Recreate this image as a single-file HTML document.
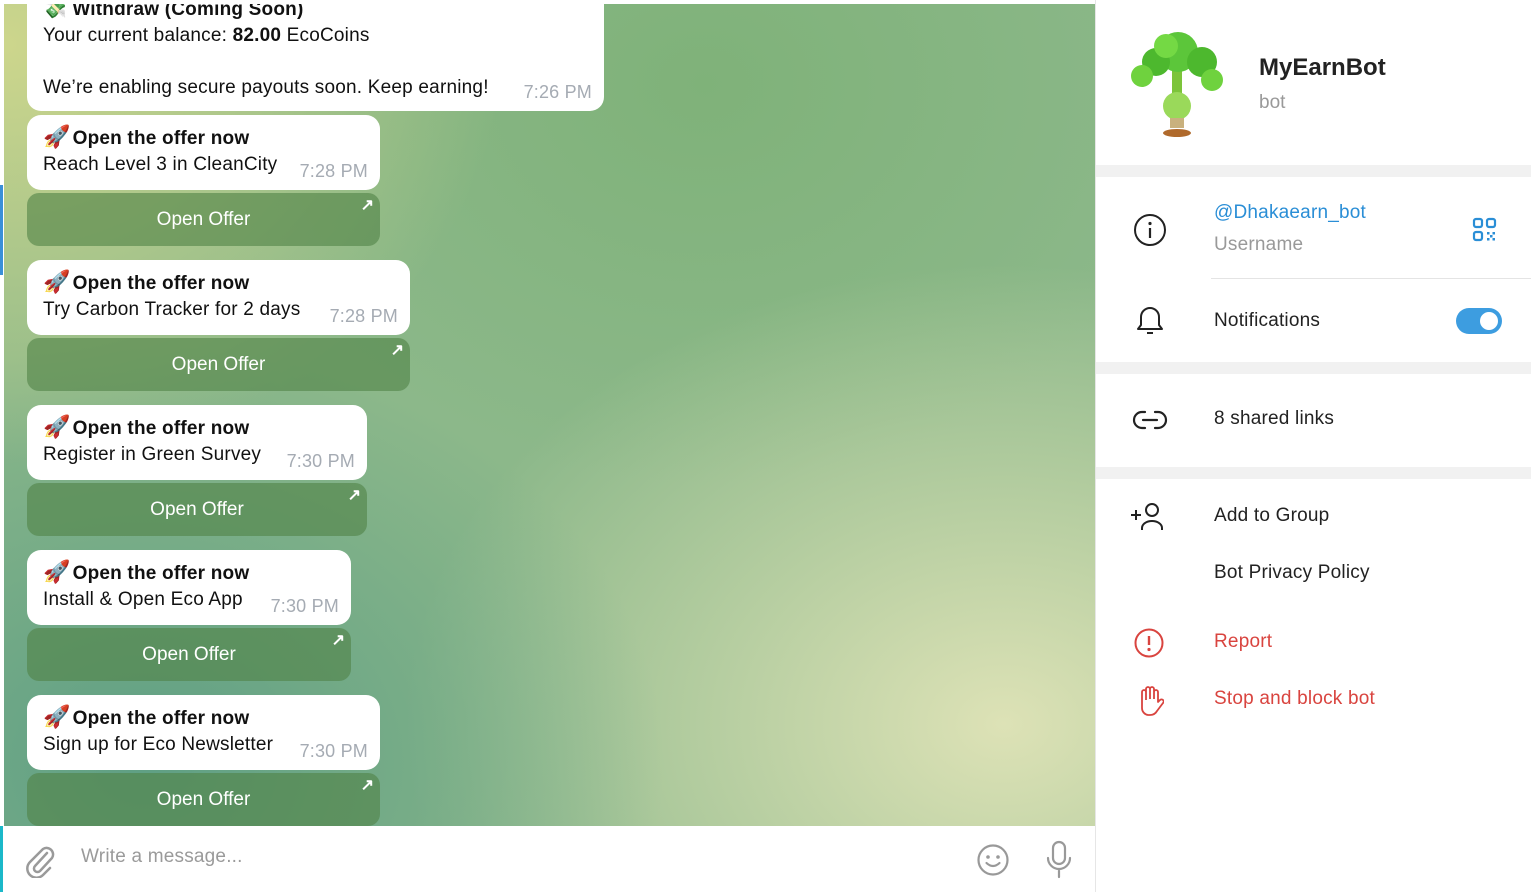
<!DOCTYPE html>
<html><head><meta charset="utf-8"><style>
*{box-sizing:border-box;margin:0;padding:0}
body{width:1531px;height:892px;overflow:hidden;background:#fff;font-family:"Liberation Sans",sans-serif;position:relative}
#chat{position:absolute;left:4px;top:4px;width:1091px;height:822px;overflow:hidden;
background:
radial-gradient(ellipse 500px 420px at 0px 40px,#cdd68c 0%,rgba(205,214,140,0) 100%),
radial-gradient(ellipse 520px 420px at 140px 760px,#5f9f84 0%,rgba(95,159,132,0) 100%),
radial-gradient(ellipse 600px 460px at 1000px 720px,#dde2b6 0%,rgba(221,226,182,0) 100%),
radial-gradient(ellipse 500px 400px at 700px 80px,#7fb279 0%,rgba(127,178,121,0) 100%),
#8cb88a;}
.b{position:absolute;left:23px;background:#fff;border-radius:14px;padding:9px 14px 0 16px;color:#111;font-size:19px;line-height:26px;letter-spacing:.2px}
.t{position:absolute;right:12px;bottom:6px;color:#a5abb3;font-size:18px}
.h{font-weight:bold}
.btn{position:absolute;left:23px;height:53px;border-radius:12px;background:rgba(80,130,70,.6);color:#fff;font-size:19px;text-align:center;line-height:53px}
.btn:after{content:"↗";position:absolute;right:6px;top:-14px;font-size:16px;font-weight:bold}
.r{font-size:22px;font-weight:normal;margin-right:2px}
#inp{position:absolute;left:4px;top:826px;width:1091px;height:66px;background:#fff}
#side{position:absolute;left:1095px;top:0;width:436px;height:892px;background:#fff;border-left:1px solid #e6e6e6}
.gap{position:absolute;left:0;width:436px;height:12px;background:#f1f1f1}
.lbl{position:absolute;left:118px;font-size:19px;color:#222;letter-spacing:.2px}
</style></head><body>
<div style="position:absolute;left:0;top:185px;width:3px;height:90px;background:#3a8fd8"></div>
<div style="position:absolute;left:0;top:826px;width:3px;height:66px;background:#1bb8c9"></div>
<div id="chat">
 <div class="b" style="top:-20px;width:577px;height:127px;border-top-left-radius:0;border-top-right-radius:0">
  <div class="h" style="margin-top:4px">💸 Withdraw (Coming Soon)</div>
  <div>Your current balance: <b>82.00</b> EcoCoins</div><div style="height:26px"></div>
  <div>We’re enabling secure payouts soon. Keep earning!</div>
  <div class="t">7:26 PM</div></div>

 <div class="b" style="top:111px;width:353px;height:75px"><div class="h"><span class="r">🚀</span>Open the offer now</div><div>Reach Level 3 in CleanCity</div><div class="t">7:28 PM</div></div>
 <div class="btn" style="top:189px;width:353px">Open Offer</div>

 <div class="b" style="top:256px;width:383px;height:75px"><div class="h"><span class="r">🚀</span>Open the offer now</div><div>Try Carbon Tracker for 2 days</div><div class="t">7:28 PM</div></div>
 <div class="btn" style="top:334px;width:383px">Open Offer</div>

 <div class="b" style="top:401px;width:340px;height:75px"><div class="h"><span class="r">🚀</span>Open the offer now</div><div>Register in Green Survey</div><div class="t">7:30 PM</div></div>
 <div class="btn" style="top:479px;width:340px">Open Offer</div>

 <div class="b" style="top:546px;width:324px;height:75px"><div class="h"><span class="r">🚀</span>Open the offer now</div><div>Install &amp; Open Eco App</div><div class="t">7:30 PM</div></div>
 <div class="btn" style="top:624px;width:324px">Open Offer</div>

 <div class="b" style="top:691px;width:353px;height:75px"><div class="h"><span class="r">🚀</span>Open the offer now</div><div>Sign up for Eco Newsletter</div><div class="t">7:30 PM</div></div>
 <div class="btn" style="top:769px;width:353px">Open Offer</div>
</div>
<div id="inp">
 <svg style="position:absolute;left:22px;top:18px" width="30" height="34" viewBox="0 0 30 34"><path d="M21 9 L9 22 a3.5 3.5 0 0 0 5 5 L26 14 a6.5 6.5 0 0 0 -9 -9 L4 18 a9 9 0 0 0 13 13 L24 24" fill="none" stroke="#9a9a9a" stroke-width="2.5" stroke-linecap="round"/></svg>
 <div style="position:absolute;left:77px;top:20px;font-size:19px;color:#9a9a9a;letter-spacing:.2px">Write a message...</div>
 <svg style="position:absolute;left:972px;top:17px" width="34" height="34" viewBox="0 0 34 34"><circle cx="17" cy="17" r="14.5" fill="none" stroke="#999" stroke-width="2.2"/><circle cx="12" cy="14" r="1.8" fill="#999"/><circle cx="22" cy="14" r="1.8" fill="#999"/><path d="M10.5 20 q6.5 6 13 0" fill="none" stroke="#999" stroke-width="2.2" stroke-linecap="round"/></svg>
 <svg style="position:absolute;left:1040px;top:14px" width="30" height="40" viewBox="0 0 30 40"><rect x="9" y="2" width="12" height="22" rx="6" fill="none" stroke="#999" stroke-width="2.2"/><path d="M4 18 a11 11 0 0 0 22 0 M15 29 v8" fill="none" stroke="#999" stroke-width="2.2" stroke-linecap="round"/></svg>
</div>
<div id="side">
 <svg style="position:absolute;left:32px;top:28px" width="98" height="112" viewBox="0 0 98 112">
  <rect x="44" y="40" width="10" height="40" fill="#7cc43a"/>
  <circle cx="49" cy="78" r="14" fill="#9ad95a"/>
  <rect x="42" y="90" width="14" height="10" fill="#c9b17e"/>
  <ellipse cx="49" cy="105" rx="14" ry="4" fill="#b06a2c"/>
  <circle cx="50" cy="24" r="20" fill="#5cc63a"/><circle cx="28" cy="34" r="14" fill="#4db82e"/><circle cx="74" cy="34" r="15" fill="#4db82e"/><circle cx="14" cy="48" r="11" fill="#6fd23e"/><circle cx="84" cy="52" r="11" fill="#6fd23e"/><circle cx="38" cy="18" r="12" fill="#74d944"/>
 </svg>
 <div style="position:absolute;left:163px;top:54px;font-size:24px;color:#222;font-weight:bold">MyEarnBot</div>
 <div style="position:absolute;left:163px;top:92px;font-size:19px;color:#999">bot</div>
 <div class="gap" style="top:165px"></div>
 <svg style="position:absolute;left:37px;top:213px" width="34" height="34" viewBox="0 0 34 34"><circle cx="17" cy="17" r="15" fill="none" stroke="#222" stroke-width="2"/><circle cx="17" cy="10.5" r="1.6" fill="#222"/><path d="M17 15v10" stroke="#222" stroke-width="2.2"/></svg>
 <div style="position:absolute;left:118px;top:202px;font-size:19px;color:#2a8ed6;letter-spacing:.2px">@Dhakaearn_bot</div>
 <div style="position:absolute;left:118px;top:234px;font-size:19px;color:#999;letter-spacing:.2px">Username</div>
 <svg style="position:absolute;left:376px;top:217px" width="26" height="26" viewBox="0 0 26 26"><g fill="none" stroke="#2a8ed6" stroke-width="2.2"><rect x="2" y="2" width="8" height="8" rx="2"/><rect x="15" y="2" width="8" height="8" rx="2"/><rect x="2" y="15" width="8" height="8" rx="2"/></g><g fill="#2a8ed6"><rect x="15" y="15" width="2.5" height="2.5"/><rect x="20.5" y="15" width="2.5" height="2.5"/><rect x="18" y="18" width="2.5" height="2.5"/><rect x="15" y="21" width="2.5" height="2.5"/><rect x="20.5" y="21" width="2.5" height="2.5"/></g></svg>
 <div style="position:absolute;left:115px;top:278px;width:321px;height:1px;background:#e4e4e4"></div>
 <svg style="position:absolute;left:39px;top:305px" width="30" height="34" viewBox="0 0 30 34"><path d="M15 3 a9 9 0 0 0 -9 9 v8 l-3 4 h24 l-3 -4 v-8 a9 9 0 0 0 -9 -9z M12 28 h6" fill="none" stroke="#222" stroke-width="2" stroke-linejoin="round"/></svg>
 <div class="lbl" style="top:310px">Notifications</div>
 <div style="position:absolute;left:360px;top:308px;width:46px;height:26px;border-radius:13px;background:#3d9de0"></div>
 <div style="position:absolute;left:381px;top:309px;width:24px;height:24px;border-radius:50%;background:#fff;border:3px solid #3d9de0"></div>
 <div class="gap" style="top:362px"></div>
 <svg style="position:absolute;left:36px;top:408px" width="36" height="24" viewBox="0 0 36 24"><path d="M13 4 h-3 a8 8 0 0 0 0 16 h3 M23 4 h3 a8 8 0 0 1 0 16 h-3 M11 12 h14" fill="none" stroke="#222" stroke-width="2.2" stroke-linecap="round"/></svg>
 <div class="lbl" style="top:408px">8 shared links</div>
 <div class="gap" style="top:467px"></div>
 <svg style="position:absolute;left:34px;top:502px" width="36" height="30" viewBox="0 0 36 30"><path d="M1 13 h10 M6 8 v10" stroke="#222" stroke-width="2"/><circle cx="22" cy="8" r="6" fill="none" stroke="#222" stroke-width="2"/><path d="M12 28 v-2 a10 7 0 0 1 20 0 v2" fill="none" stroke="#222" stroke-width="2"/></svg>
 <div class="lbl" style="top:505px">Add to Group</div>
 <div class="lbl" style="top:562px">Bot Privacy Policy</div>
 <svg style="position:absolute;left:37px;top:627px" width="32" height="32" viewBox="0 0 32 32"><circle cx="16" cy="16" r="13.5" fill="none" stroke="#d9443f" stroke-width="2"/><path d="M16 9v9" stroke="#d9443f" stroke-width="2.4"/><circle cx="16" cy="22.5" r="1.6" fill="#d9443f"/></svg>
 <div class="lbl" style="top:631px;color:#d9443f">Report</div>
 <svg style="position:absolute;left:40px;top:684px" width="28" height="32" viewBox="0 0 28 32"><path d="M6 20 v-12 a2 2 0 0 1 4 0 v-3 a2 2 0 0 1 4 0 a2 2 0 0 1 4 0 v3 a2 2 0 0 1 4 0 v10 l2 -2 a2 2 0 0 1 3 3 l-6 8 a8 8 0 0 1 -7 4 h-2 a7 7 0 0 1 -6 -7z M10 8v8 M14 5v10 M18 5v10" fill="none" stroke="#d9443f" stroke-width="1.8" stroke-linejoin="round"/></svg>
 <div class="lbl" style="top:688px;color:#d9443f">Stop and block bot</div>
</div>
</body></html>
